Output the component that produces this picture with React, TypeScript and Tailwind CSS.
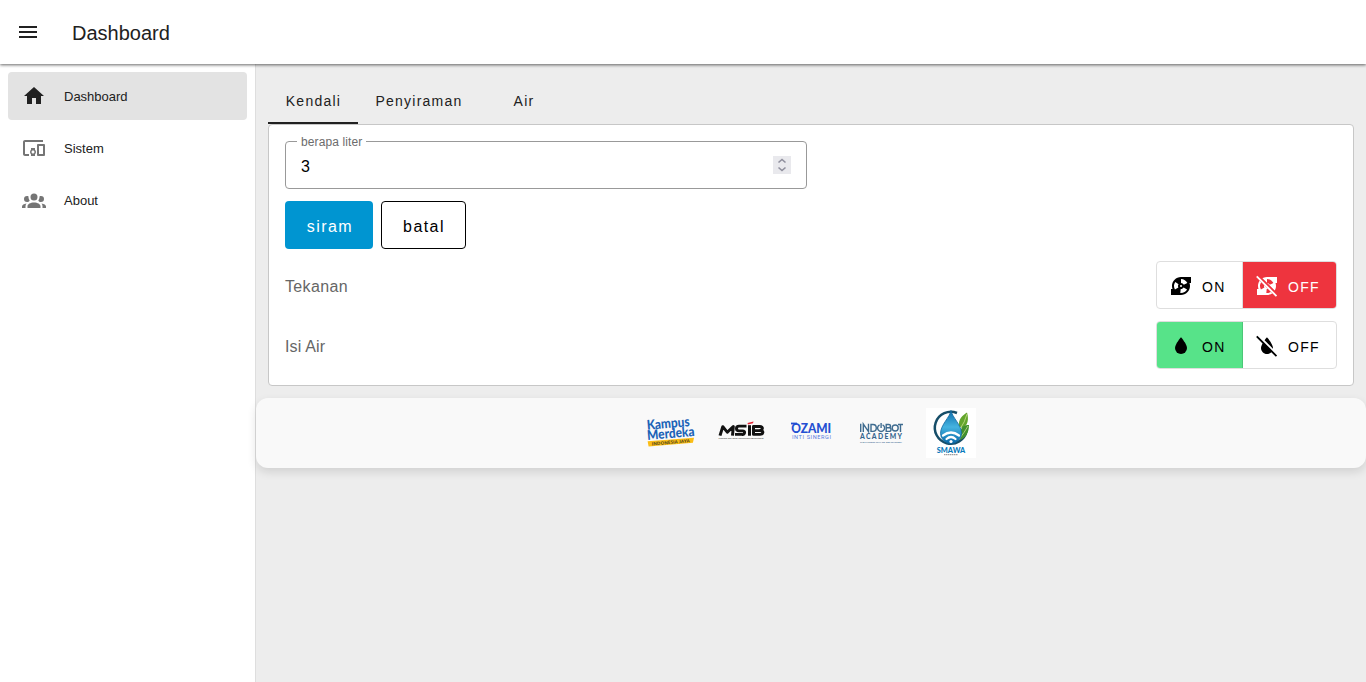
import { useState } from "react";
import type { ReactNode } from "react";

const ICONS = {
  menu: "M3,6H21V8H3V6M3,11H21V13H3V11M3,16H21V18H3V16Z",
  home: "M10,20V14H14V20H19V12H22L12,3L2,12H5V20H10Z",
  devices:
    "M3 6H21V4H3C1.9 4 1 4.9 1 6V18C1 19.1 1.9 20 3 20H7V18H3V6M13 12H9V13.78C8.39 14.33 8 15.11 8 16C8 16.89 8.39 17.67 9 18.22V20H13V18.22C13.61 17.67 14 16.88 14 16S13.61 14.33 13 13.78V12M11 17.5C10.17 17.5 9.5 16.83 9.5 16S10.17 14.5 11 14.5 12.5 15.17 12.5 16 11.83 17.5 11 17.5M22 8H16C15.5 8 15 8.5 15 9V19C15 19.5 15.5 20 16 20H22C22.5 20 23 19.5 23 19V9C23 8.5 22.5 8 22 8M21 18H17V10H21V18Z",
  group:
    "M12,5.5A3.5,3.5 0 0,1 15.5,9A3.5,3.5 0 0,1 12,12.5A3.5,3.5 0 0,1 8.5,9A3.5,3.5 0 0,1 12,5.5M5,8C5.56,8 6.08,8.15 6.53,8.42C6.38,9.85 6.8,11.27 7.66,12.38C7.16,13.34 6.16,14 5,14A3,3 0 0,1 2,11A3,3 0 0,1 5,8M19,8A3,3 0 0,1 22,11A3,3 0 0,1 19,14C17.84,14 16.84,13.34 16.34,12.38C17.2,11.27 17.62,9.85 17.47,8.42C17.92,8.15 18.44,8 19,8M5.5,18.25C5.5,16.18 8.41,14.5 12,14.5C15.59,14.5 18.5,16.18 18.5,18.25V20H5.5V18.25M0,20V18.5C0,17.11 1.89,15.94 4.45,15.6C3.86,16.28 3.5,17.22 3.5,18.25V20H0M24,20H20.5V18.25C20.5,17.22 20.14,16.28 19.55,15.6C22.11,15.94 24,17.11 24,18.5V20Z",
  water: "M12,20A6,6 0 0,1 6,14C6,10 12,3.25 12,3.25C12,3.25 18,10 18,14A6,6 0 0,1 12,20Z",
  waterOff:
    "M20.84 22.73L16.29 18.18C15.2 19.3 13.69 20 12 20C8.69 20 6 17.31 6 14C6 12.67 6.67 11.03 7.55 9.44L1.11 3L2.39 1.73L22.11 21.46L20.84 22.73M18 14C18 10 12 3.25 12 3.25S10.84 4.55 9.55 6.35L17.95 14.75C18 14.5 18 14.25 18 14Z",
  pump: "M2 21V15H3.5C3.18 14.06 3 13.05 3 12C3 7.03 7.03 3 12 3H22V9H20.5C20.82 9.94 21 10.95 21 12C21 16.97 16.97 21 12 21H2M5 12C5 13.28 5.34 14.47 5.94 15.5L9.4 13.5C9.15 13.06 9 12.55 9 12C9 11.35 9.21 10.75 9.56 10.26L6.3 7.93C5.5 9.08 5 10.5 5 12M12 19C14.59 19 16.85 17.59 18.06 15.5L14.6 13.5C14.08 14.4 13.11 15 12 15L11.71 14.97L11.33 18.97L12 19M12 9C13.21 9 14.26 9.72 14.73 10.76L18.37 9.1C17.27 6.68 14.83 5 12 5V9M12 11A1 1 0 0 0 11 12A1 1 0 0 0 12 13A1 1 0 0 0 13 12A1 1 0 0 0 12 11Z",
};

function Icon({ name, className = "" }: { name: keyof typeof ICONS; className?: string }) {
  return (
    <svg viewBox="0 0 24 24" fill="currentColor" className={`size-6 shrink-0 ${className}`}>
      <path d={ICONS[name]} />
    </svg>
  );
}

function PumpOffIcon() {
  return (
    <svg viewBox="0 0 24 24" fill="currentColor" className="mt-px size-6 shrink-0">
      <clipPath id="pump-parts">
        <path d="M3.2 0H24V20.8ZM0 2L22 24H0Z" />
      </clipPath>
      <path d={ICONS.pump} clipPath="url(#pump-parts)" />
      <path d="M2.39 1.73L1.11 3L20.84 22.73L22.11 21.46Z" />
    </svg>
  );
}

function NavItem({ icon, label, active }: { icon: keyof typeof ICONS; label: string; active?: boolean }) {
  return (
    <a
      className={`flex h-12 items-center rounded px-3.5 text-[13px] text-[#212121] ${active ? "bg-[#e3e3e3]" : ""}`}
    >
      <Icon name={icon} className={active ? "" : "text-[#757575]"} />
      <span className="ml-[18px] pt-0.5">{label}</span>
    </a>
  );
}

function ToggleRow({ label, children }: { label: ReactNode; children: ReactNode }) {
  return (
    <div className="mt-3 flex h-12 items-center justify-between">
      <span className="pt-1 text-base tracking-[0.35px] text-[#666]">{label}</span>
      <div className="flex h-12 overflow-hidden rounded border border-[#dedede] text-sm tracking-[1.25px]">
        {children}
      </div>
    </div>
  );
}

function KampusLogo() {
  return (
    <svg viewBox="0 0 50 50" className="size-[50px] overflow-visible" fontFamily="Lato, sans-serif">
      <g transform="rotate(-5 25 25)" fontWeight="900" fill="#1c63b7">
        <text x="1.5" y="19.8" fontSize="13.5" textLength="43" lengthAdjust="spacingAndGlyphs">Kampus</text>
        <text x="1" y="30" fontSize="13.5" textLength="47.5" lengthAdjust="spacingAndGlyphs">Merdeka</text>
        <path d="M1 31.3L47.5 31.8L46 36.6L1.5 36.6Z" fill="#fbbd16" />
        <text x="5" y="35.8" fontSize="4.4" fill="#4a4220" textLength="38">INDONESIA JAYA</text>
      </g>
    </svg>
  );
}

function MsibLogo() {
  return (
    <svg viewBox="0 0 50 50" className="size-[50px]">
      <g fill="none" stroke="#111" strokeWidth="3" strokeLinejoin="round" transform="translate(0 -1.6) scale(1 .94)">
        <path d="M4 31.2L6.8 21.5L11.3 27.5L17.3 21.5L16.5 31.2" />
        <path d="M30.5 21H23Q20.5 21 20.5 23.5T23 26H26.5Q29 26 28.5 28.2T26 29.8H19" />
        <path d="M33.5 20V31.2" />
        <path d="M37.5 29.8V21.4H43.8Q46.6 21.4 46.3 23.5T43.3 25.7H38H44.3Q47.1 25.7 46.8 27.8T43.8 29.8Z" />
      </g>
      <path d="M31.5 15L37.5 13.6L37 15.3L32 16.4Z" fill="#e32636" />
      <text x="2.5" y="30.7" fontSize="2.5" fill="#333" fontFamily="Liberation Sans, sans-serif" textLength="45">Magang dan Studi Independen Bersertifikat</text>
    </svg>
  );
}

function OzamiLogo() {
  return (
    <svg viewBox="0 0 50 50" className="size-[50px]" fill="#244fd2">
      <text x="5.2" y="24.8" fontFamily="Lato, sans-serif" fontSize="13.5" fontWeight="900" textLength="40" lengthAdjust="spacingAndGlyphs">OZAMI</text>
      <path d="M5 14.6H11V16.4H5Z" />
      <text x="6" y="31.4" fontFamily="Roboto, sans-serif" fontSize="5.6" fill="#5a7cdf" textLength="39">INTI SINERGI</text>
    </svg>
  );
}

function IndobotLogo() {
  return (
    <svg viewBox="0 0 50 50" className="size-[50px]" fill="#35658f">
      <g fill="none" stroke="#3f6c90" strokeWidth="1.4">
        <path d="M4.7 15.8V24M7.3 24V16L12.5 23.6V15.8M15 16.5V23.4H17Q20.3 23.4 20.3 20T17 16.5Z" />
        <path d="M23.6 16.8A3.5 3.5 0 1 0 26.6 16.8M25.1 15V20" />
        <path d="M30.2 16.5V23.4H33Q35 23.4 35 21.5T33 19.8H30.5H32.6Q34.5 19.8 34.5 18.1T32.6 16.5Z" />
        <circle cx="39.2" cy="20" r="3" />
        <path d="M42 16.5H47M44.5 16.5V24" />
      </g>
      <text x="4" y="30.9" fontFamily="Lato, sans-serif" fontSize="6.8" fontWeight="900" textLength="42">ACADEMY</text>
      <text x="4" y="34.6" fontFamily="Lato, sans-serif" fontSize="2.4" fontWeight="700" textLength="42">THE FASTEST WAY TO GET MASTERY</text>
    </svg>
  );
}

function SmawaLogo() {
  return (
    <svg viewBox="0 0 50 50" className="size-[50px] bg-white">
      <defs>
        <linearGradient id="drop" x1="0" y1="0" x2="0" y2="1">
          <stop offset="0" stopColor="#0b6cab" />
          <stop offset=".5" stopColor="#45b3e0" />
          <stop offset="1" stopColor="#0868a8" />
        </linearGradient>
      </defs>
      <path d="M31 5A16 16 0 1 0 40.5 23" fill="none" stroke="#174e69" strokeWidth="2.5" />
      <path d="M33 18C32 11 37 7 41 4.5C43 11 42 18 36 20Z" fill="#63a52c" />
      <path d="M35 25C34 19 38 17 43 17C43 24 40 30 34 32Z" fill="#42912e" />
      <path d="M34 21Q39 14 41 6M34 30Q38 25 42 18" stroke="#d7e99b" strokeWidth=".7" fill="none" />
      <path d="M25 2.5C24 9 14.5 17 14.5 25.5A10.5 10 0 0 0 35.5 25.5C35.5 17 26 9 25 2.5Z" fill="url(#drop)" stroke="#1268a0" strokeWidth=".8" />
      <path d="M17 27.5Q25 21.5 33 27.5M20.5 31Q25 27 29.5 31" fill="none" stroke="white" strokeWidth="2.2" strokeLinecap="round" />
      <circle cx="25" cy="33.5" r="1.6" fill="white" />
      <text x="10.8" y="44.9" fontFamily="Lato, sans-serif" fontWeight="900" fontSize="7.8" fill="#0879bb" textLength="28.5" lengthAdjust="spacingAndGlyphs">SMAWA</text>
      <path d="M18 46.7H32" stroke="#555" strokeWidth=".7" strokeDasharray="1.5 .5" />
    </svg>
  );
}

export default function App() {
  const [liters, setLiters] = useState("3");
  return (
    <div className="flex h-screen flex-col bg-[#ededed] font-['Liberation_Sans',Arial,sans-serif] text-[#212121]">
      <header className="relative z-10 flex h-16 shrink-0 items-center bg-white px-4 shadow-[0_1px_3px_rgba(0,0,0,0.6)]">
        <Icon name="menu" />
        <h1 className="ml-8 pt-0.5 text-xl">Dashboard</h1>
      </header>
      <div className="flex min-h-0 flex-1">
        <nav className="flex w-64 shrink-0 flex-col gap-1 border-r border-[#dedede] bg-white p-2">
          <NavItem icon="home" label="Dashboard" active />
          <NavItem icon="devices" label="Sistem" />
          <NavItem icon="group" label="About" />
        </nav>
        <main className="min-w-0 flex-1">
          <div className="px-3 pt-3">
            <div className="flex h-12 text-sm tracking-[1.25px]">
              <button className="w-[90px] border-b-2 border-[#212121] pl-px pt-1">Kendali</button>
              <button className="w-[121px] pl-px pt-0.5">Penyiraman</button>
              <button className="w-[90px] pt-0.5">Air</button>
            </div>
            <section className="h-[262px] rounded border border-[#c7c7c7] bg-white p-4">
              <label className="relative block h-12 w-[522px] rounded border border-[#999]">
                <span className="absolute -top-2 left-[11px] bg-white px-1 text-xs leading-4 tracking-[0.11px] text-[#6c6c6c]">berapa liter</span>
                <span className="flex h-full items-center justify-between pl-[15px] pr-[15px]">
                  <input
                    type="text"
                    inputMode="numeric"
                    value={liters}
                    onChange={(e) => setLiters(e.target.value)}
                    className="w-96 pt-1 text-base text-black outline-none"
                  />
                  <svg viewBox="0 0 18 18" className="h-[18px] w-[18px] bg-[#e9e9ed]">
                    <path d="M5.5 6.5L9 3.5L12.5 6.5M5.5 11.5L9 14.5L12.5 11.5" fill="none" stroke="#8f8f9d" strokeWidth="1.6" />
                  </svg>
                </span>
              </label>
              <div className="mt-3 flex gap-2 text-base tracking-[1.43px]">
                <button className="h-12 w-[88px] rounded bg-[#0095d1] pl-[2px] pt-1 text-white">siram</button>
                <button className="h-12 w-[85px] rounded border border-black pl-px pt-1 text-black">batal</button>
              </div>
              <ToggleRow label="Tekanan">
                <button className="flex w-[86px] items-center gap-[9px] border-r border-[#dedede] pl-3 text-black">
                  <Icon name="pump" className="mt-px" />
                  <span className="pt-1">ON</span>
                </button>
                <button className="flex w-[93px] items-center gap-[9px] bg-[#ee343e] pl-3 text-white">
                  <PumpOffIcon />
                  <span className="pt-1">OFF</span>
                </button>
              </ToggleRow>
              <ToggleRow label={<span className="tracking-[0.15px]">Isi Air</span>}>
                <button className="flex w-[86px] items-center gap-[9px] border-r border-[#4bc777] bg-[#57e389] pl-3 text-black">
                  <Icon name="water" className="mt-px" />
                  <span className="pt-1">ON</span>
                </button>
                <button className="flex w-[93px] items-center gap-[9px] pl-3 text-black">
                  <Icon name="waterOff" className="mt-px" />
                  <span className="pt-1">OFF</span>
                </button>
              </ToggleRow>
            </section>
          </div>
          <footer className="mt-3 flex h-[70px] items-center justify-center gap-5 rounded-xl bg-[#f9f9f9] shadow-[0_4px_10px_rgba(0,0,0,0.12)]">
            <KampusLogo />
            <MsibLogo />
            <OzamiLogo />
            <IndobotLogo />
            <SmawaLogo />
          </footer>
        </main>
      </div>
    </div>
  );
}
